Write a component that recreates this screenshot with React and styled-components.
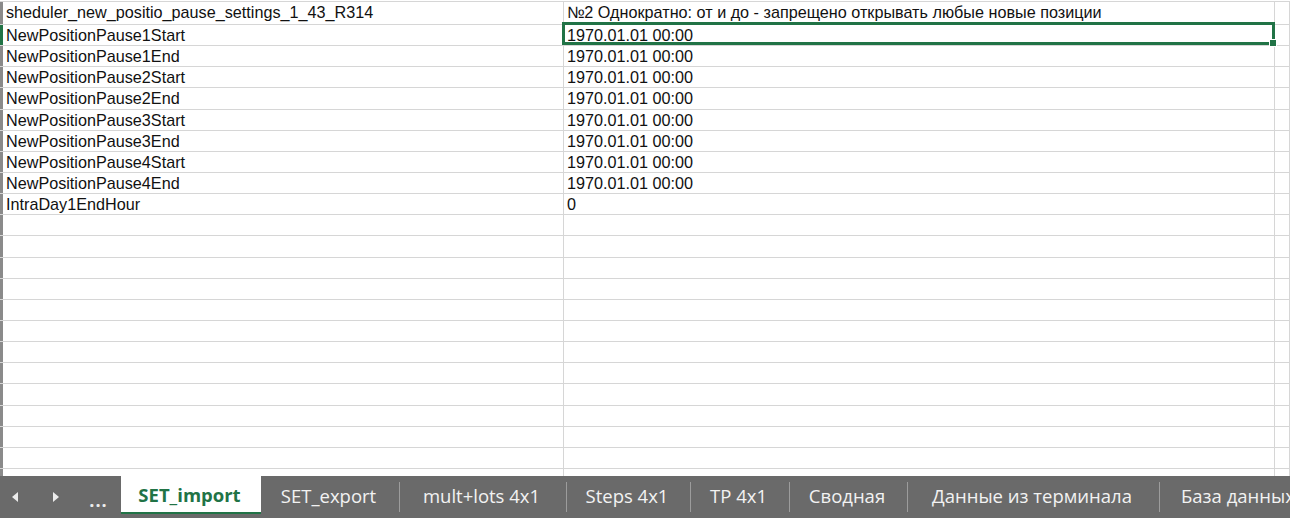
import React from "react";
import styled, { createGlobalStyle } from "styled-components";

const Global = createGlobalStyle`
  html, body { margin: 0; padding: 0; background: #ffffff; }
  body { width: 1290px; height: 518px; overflow: hidden; }
  #root { width: 1290px; height: 518px; }
`;

const GREEN = "#217346";
const GRID = "#d6d6d6";

const Page = styled.div`
  display: flex;
  flex-direction: column;
  width: 1290px;
  height: 518px;
  overflow: hidden;
`;

const Sheet = styled.div`
  height: 476px;
  padding-top: 1px;
  box-sizing: border-box;
  overflow: hidden;
  background: #fff;
`;

const Grid = styled.div`
  display: flex;
  flex-direction: column;
  border-top: 1px solid ${GRID};
`;

const Row = styled.div`
  display: grid;
  grid-template-columns: 3px 561px 711px 1fr;
  height: ${(p) => p.$h}px;
  box-sizing: border-box;
  flex: none;
`;

const RowHead = styled.div`
  background: ${(p) => (p.$active ? GREEN : "#8a8a8a")};
  border-bottom: 1px solid ${GRID};
`;

const Cell = styled.div`
  position: relative;
  box-sizing: border-box;
  border-right: 1px solid ${GRID};
  border-bottom: 1px solid ${GRID};
  padding: 0 3px;
  font-family: "Liberation Sans", Arial, sans-serif;
  font-size: 16.2px;
  line-height: 20px;
  color: #111;
  white-space: nowrap;
  overflow: ${(p) => (p.$selected ? "visible" : "hidden")};
  z-index: ${(p) => (p.$selected ? 2 : 0)};
`;

const Selection = styled.div`
  position: absolute;
  top: -3px;
  left: -2px;
  right: -1px;
  bottom: 0;
  border: 3px solid ${GREEN};
  pointer-events: none;
`;

const FillHandle = styled.div`
  position: absolute;
  right: -5px;
  bottom: -5px;
  width: 6px;
  height: 6px;
  background: ${GREEN};
  border: 1px solid #fff;
`;

const TabBar = styled.div`
  display: flex;
  align-items: stretch;
  height: 42px;
  background: #6a6a6a;
  font-family: "Open Sans", "Noto Sans", sans-serif;
  font-size: 18.5px;
  color: #f2f2f2;
  white-space: nowrap;
  overflow: hidden;
  flex: none;
`;

const Nav = styled.div`
  display: flex;
  align-items: center;
  width: 121px;
  flex: none;
`;

const NavButton = styled.div`
  display: flex;
  align-items: center;
  justify-content: center;
  width: ${(p) => p.$w}px;
  height: 100%;
  color: #ececec;
`;

const Dots = styled.span`
  font-size: 18px;
  font-weight: 700;
  letter-spacing: 1px;
  line-height: 1;
  padding-top: 6px;
`;

const Tab = styled.div`
  display: flex;
  align-items: center;
  justify-content: ${(p) => (p.$w ? "center" : "flex-start")};
  flex: none;
  width: ${(p) => (p.$w ? `${p.$w}px` : "auto")};
  padding: 0 ${(p) => (p.$w ? 3 : 0)}px ${(p) => (p.$active ? 0 : 4)}px ${(p) => (p.$w ? 0 : 21)}px;
  height: ${(p) => (p.$active ? "38px" : "42px")};
  box-sizing: border-box;
  background: ${(p) => (p.$active ? "#ffffff" : "transparent")};
  color: ${(p) => (p.$active ? GREEN : "#f2f2f2")};
  font-weight: ${(p) => (p.$active ? 700 : 400)};
  border-bottom: ${(p) => (p.$active ? `2px solid ${GREEN}` : "none")};
`;

const Sep = styled.div`
  width: 1px;
  height: 30px;
  align-self: center;
  background: #9c9c9c;
  flex: none;
`;

const lines = [1, 24, 45, 66, 87, 109, 130, 151, 172, 193, 214, 235, 257, 278, 299, 320, 341, 362, 383, 405, 426, 447, 468, 489];

const data = [
  ["sheduler_new_positio_pause_settings_1_43_R314", "№2 Однократно: от и до - запрещено открывать любые новые позиции"],
  ["NewPositionPause1Start", "1970.01.01 00:00"],
  ["NewPositionPause1End", "1970.01.01 00:00"],
  ["NewPositionPause2Start", "1970.01.01 00:00"],
  ["NewPositionPause2End", "1970.01.01 00:00"],
  ["NewPositionPause3Start", "1970.01.01 00:00"],
  ["NewPositionPause3End", "1970.01.01 00:00"],
  ["NewPositionPause4Start", "1970.01.01 00:00"],
  ["NewPositionPause4End", "1970.01.01 00:00"],
  ["IntraDay1EndHour", "0"],
];

const tabs = [
  { name: "SET_export", w: 138 },
  { name: "mult+lots 4x1", w: 166 },
  { name: "Steps 4x1", w: 123 },
  { name: "TP 4x1", w: 98 },
  { name: "Сводная", w: 117 },
  { name: "Данные из терминала", w: 251 },
  { name: "База данных" },
];

const Arrow = ({ dir }) => (
  <svg width="6" height="10" viewBox="0 0 6 10">
    {dir === "left" ? (
      <polygon points="6,0 6,10 0,5" fill="currentColor" />
    ) : (
      <polygon points="0,0 0,10 6,5" fill="currentColor" />
    )}
  </svg>
);

export default function App() {
  const rows = [];
  for (let i = 1; i < lines.length; i++) {
    const h = lines[i] - lines[i - 1];
    const d = data[i - 1] || ["", ""];
    const active = i === 2;
    rows.push(
      <Row key={i} $h={h}>
        <RowHead $active={active} />
        <Cell>{d[0]}</Cell>
        <Cell $selected={active}>
          {d[1]}
          {active && (
            <Selection>
              <FillHandle />
            </Selection>
          )}
        </Cell>
        <Cell />
      </Row>
    );
  }

  return (
    <Page>
      <Global />
      <Sheet>
        <Grid>{rows}</Grid>
      </Sheet>
      <TabBar>
        <Nav>
          <NavButton $w={30}>
            <Arrow dir="left" />
          </NavButton>
          <NavButton $w={52}>
            <Arrow dir="right" />
          </NavButton>
          <NavButton $w={33}>
            <Dots>...</Dots>
          </NavButton>
        </Nav>
        <Tab $active $w={140}>SET_import</Tab>
        {tabs.map((t, i) => (
          <React.Fragment key={t.name}>
            {i > 0 && <Sep />}
            <Tab $w={t.w}>{t.name}</Tab>
          </React.Fragment>
        ))}
      </TabBar>
    </Page>
  );
}
